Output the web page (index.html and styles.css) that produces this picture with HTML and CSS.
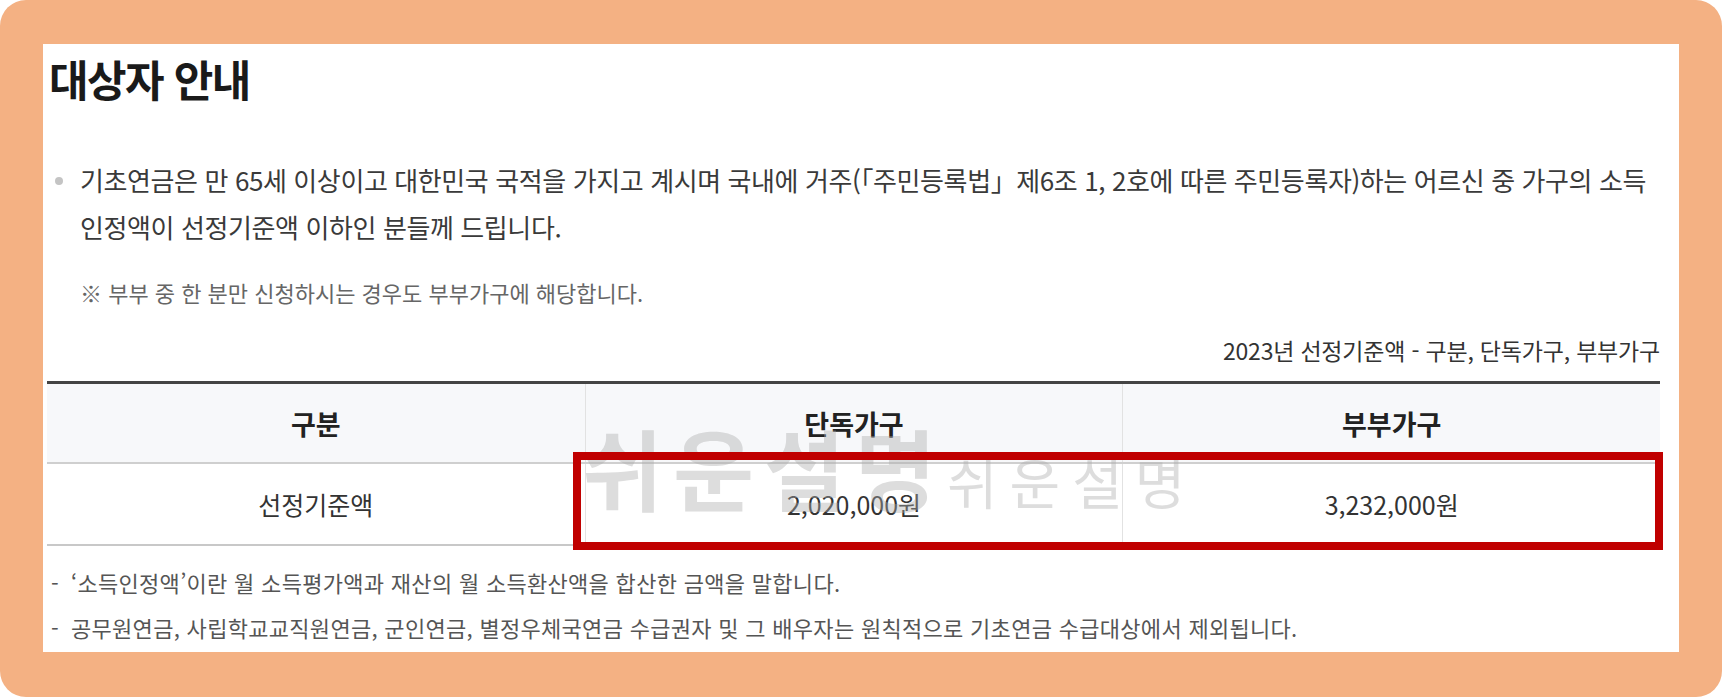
FILE: index.html
```html
<!DOCTYPE html>
<html lang="ko">
<head>
  <meta charset="UTF-8" />
  <meta name="viewport" content="width=device-width, initial-scale=1.0"/>
  <title>대상자 안내 - 기초연금</title>
  <link rel="stylesheet" href="styles.css">
</head>
<body>
  <div class="moldura">
    <section class="painel">
      <h2 class="titulo">대상자 안내</h2>

      <ul class="lista-info">
        <li>기초연금은 만 65세 이상이고 대한민국 국적을 가지고 계시며 국내에 거주(「주민등록법」제6조 1, 2호에 따른 주민등록자)하는 어르신 중 가구의 소득 인정액이 선정기준액 이하인 분들께 드립니다.</li>
      </ul>
      <p class="nota">※ 부부 중 한 분만 신청하시는 경우도 부부가구에 해당합니다.</p>

      <p class="legenda">2023년 선정기준액 - 구분, 단독가구, 부부가구</p>

      <div class="tabela-box">
        <div class="tabela">
          <div class="linha cabecalho">
            <div class="celula">구분</div>
            <div class="celula">단독가구</div>
            <div class="celula">부부가구</div>
          </div>
          <div class="linha corpo">
            <div class="celula">선정기준액</div>
            <div class="celula">2,020,000원</div>
            <div class="celula">3,232,000원</div>
          </div>
        </div>
        <!-- marca d'agua e destaque ficam por cima da tabela -->
        <span class="marca marca-grande">쉬운설명</span>
        <span class="marca marca-pequena">쉬운설명</span>
        <div class="destaque"></div>
      </div>

      <ul class="rodape-notas">
        <li>‘소득인정액’이란 월 소득평가액과 재산의 월 소득환산액을 합산한 금액을 말합니다.</li>
        <li>공무원연금, 사립학교교직원연금, 군인연금, 별정우체국연금 수급권자 및 그 배우자는 원칙적으로 기초연금 수급대상에서 제외됩니다.</li>
      </ul>
    </section>
  </div>
</body>
</html>
```

FILE: styles.css
```css
:root {
  --cor-moldura: #f4b183;
  --cor-texto: #333;
  --cor-cinza: #666;
  --cor-vermelho: #c00000;
}

* {
  margin: 0;
  padding: 0;
  box-sizing: border-box;
}

body {
  font-family: "Noto Sans CJK KR", "Noto Sans", sans-serif;
  background-color: #fff;
  color: var(--cor-texto);
  width: 1722px;
  height: 697px;
  overflow: hidden;
}

.moldura {
  background-color: var(--cor-moldura);
  border-radius: 26px;
  height: 697px;
  padding: 44px 43px 45px 43px;
}

.painel {
  background-color: #fff;
  height: 100%;
  padding: 8px 19px 0 4px;
}

.titulo {
  font-size: 43px;
  line-height: 52px;
  font-weight: bold;
  color: #1a1a1a;
  letter-spacing: -1.5px;
  margin-left: 2px;
}

.lista-info {
  list-style: none;
  margin-top: 52px;
}

.lista-info li {
  position: relative;
  padding-left: 33px;
  font-size: 26px;
  line-height: 47px;
  letter-spacing: -0.4px;
  color: #3a3a3a;
  word-break: keep-all;
}

.lista-info li::before {
  content: "";
  position: absolute;
  left: 8px;
  top: 21px;
  width: 8px;
  height: 8px;
  border-radius: 50%;
  background-color: #c4c4c4;
}

.nota {
  font-size: 22px;
  line-height: 30px;
  color: var(--cor-cinza);
  padding-left: 33px;
  margin-top: 27px;
}

.legenda {
  text-align: right;
  font-size: 23px;
  line-height: 30px;
  letter-spacing: -0.2px;
  margin-top: 28px;
}

.tabela-box {
  position: relative;
  margin-top: 16px;
}

.tabela {
  border-top: 3px solid #444;
  border-bottom: 2px solid #c8c8c8;
}

.linha {
  display: grid;
  grid-template-columns: repeat(3, 1fr);
}

.celula {
  display: flex;
  align-items: center;
  justify-content: center;
  border-left: 1px solid #e2e2e2;
}

.celula:first-child {
  border-left: none;
}

.cabecalho {
  height: 80px;
  background-color: #f7f8fa;
  border-bottom: 2px solid #cfcfcf;
  font-size: 27px;
  font-weight: bold;
  color: #222;
}

.corpo {
  height: 80px;
  font-size: 25px;
  color: #333;
}

.marca {
  position: absolute;
  color: rgba(170, 170, 170, 0.4);
  white-space: nowrap;
  pointer-events: none;
}

.marca-grande {
  left: 535px;
  top: 35px;
  font-size: 88px;
  line-height: 100px;
  font-weight: bold;
  letter-spacing: 10px;
}

.marca-pequena {
  left: 900px;
  top: 64px;
  font-size: 55px;
  line-height: 70px;
  letter-spacing: 12px;
}

.destaque {
  position: absolute;
  left: 526px;
  top: 71px;
  width: 1090px;
  height: 98px;
  border: 8px solid var(--cor-vermelho);
}

.rodape-notas {
  list-style: none;
  margin-top: 21px;
}

.rodape-notas li {
  position: relative;
  padding-left: 24px;
  font-size: 22px;
  line-height: 30px;
  letter-spacing: 0.3px;
  color: #555;
  margin-bottom: 15px;
}

.rodape-notas li::before {
  content: "-";
  position: absolute;
  left: 4px;
  top: 0;
}
```
